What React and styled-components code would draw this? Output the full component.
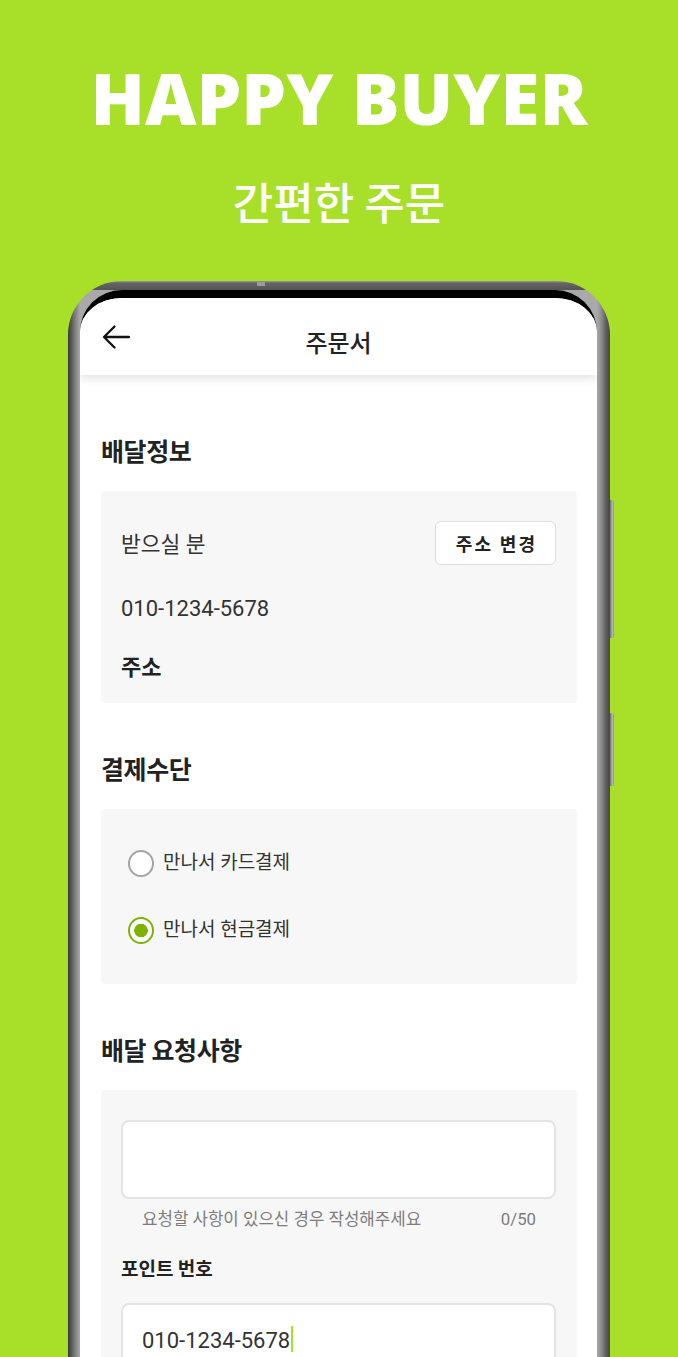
import styled, { createGlobalStyle } from "styled-components";

const GREEN = "#a7df29";

const GlobalStyle = createGlobalStyle`
  body {
    margin: 0;
    background: ${GREEN};
  }
  * {
    box-sizing: border-box;
  }
`;

const BackArrow = () => (
  <svg width="28" height="24" viewBox="0 0 28 24" fill="none">
    <path
      d="M27 12H2.5M12.5 1.5L2 12l10.5 10.5"
      stroke="#111"
      strokeWidth="2.3"
      strokeLinecap="round"
      strokeLinejoin="round"
    />
  </svg>
);

const App = () => {
  return (
    <Page>
      <GlobalStyle />
      <Title>HAPPY BUYER</Title>
      <Subtitle>간편한 주문</Subtitle>

      <Phone>
        <TopMark />
        <SideKey $top={219} $height={138} />
        <SideKey $top={432} $height={73} />

        <Screen>
          <AppBar>
            <BackButton aria-label="뒤로">
              <BackArrow />
            </BackButton>
            <BarTitle>주문서</BarTitle>
          </AppBar>

          <Content>
            <SectionTitle>배달정보</SectionTitle>
            <InfoCard>
              <InfoRow>
                <Recipient>받으실 분</Recipient>
                <ChangeButton>주소 변경</ChangeButton>
              </InfoRow>
              <PhoneNumber>010-1234-5678</PhoneNumber>
              <Address>주소</Address>
            </InfoCard>

            <SectionTitle>결제수단</SectionTitle>
            <PayCard>
              <RadioRow>
                <RadioMark />
                <RadioLabel>만나서 카드결제</RadioLabel>
              </RadioRow>
              <RadioRow>
                <RadioMark $checked />
                <RadioLabel>만나서 현금결제</RadioLabel>
              </RadioRow>
            </PayCard>

            <SectionTitle>배달 요청사항</SectionTitle>
            <RequestCard>
              <RequestBox readOnly value="" />
              <HelperRow>
                <span>요청할 사항이 있으신 경우 작성해주세요</span>
                <span>0/50</span>
              </HelperRow>
              <FieldLabel>포인트 번호</FieldLabel>
              <PointInput>
                010-1234-5678
                <Caret />
              </PointInput>
            </RequestCard>
          </Content>

          <ConfirmBar />
        </Screen>
      </Phone>
    </Page>
  );
};

export default App;

const Page = styled.div`
  height: 1357px;
  overflow: hidden;
  background: ${GREEN};
  display: flex;
  flex-direction: column;
  align-items: center;
`;

const Title = styled.h1`
  margin: 62px 0 0;
  font: 800 71px/72px "Open Sans", "Noto Sans", sans-serif;
  color: #fff;
`;

const Subtitle = styled.h2`
  margin: 45px 0 0;
  font: 500 44px/44px "Noto Sans CJK KR", sans-serif;
  color: #fff;
`;

const Phone = styled.div`
  position: relative;
  margin-top: 58px;
  width: 542px;
  flex: 1;
  display: flex;
  flex-direction: column;
  padding: 9px 13px 0 12px;
  border-radius: 54px 54px 0 0;
  background:
    linear-gradient(180deg, #9a9a9a 0, #666 2px, #535353 9px, transparent 9px),
    linear-gradient(
      90deg,
      #3a3a3a 0,
      #555 3px,
      #7d7d7d 7px,
      #a9a9a9 12px,
      #a9a9a9 calc(100% - 13px),
      #8f8f8f calc(100% - 9px),
      #5e5e5e calc(100% - 4px),
      #444 100%
    );
`;

const TopMark = styled.span`
  position: absolute;
  top: 1px;
  left: 189px;
  width: 8px;
  height: 4px;
  background: #9b9b9b;
`;

const SideKey = styled.span`
  position: absolute;
  right: -4px;
  top: ${(p) => p.$top}px;
  width: 4px;
  height: ${(p) => p.$height}px;
  border-radius: 0 2px 2px 0;
  background: linear-gradient(90deg, #6d6d6d, #b8b8b8 60%, #8a8a8a);
`;

const Screen = styled.div`
  position: relative;
  flex: 1;
  background: #fff;
  border-top: 8px solid #000;
  border-radius: 42px 42px 0 0;
  overflow: hidden;
  font-family: Roboto, "Noto Sans CJK KR", sans-serif;
  color: #333;
`;

const AppBar = styled.header`
  position: relative;
  z-index: 1;
  height: 77px;
  display: grid;
  grid-template-columns: 82px 1fr 82px;
  align-items: center;
  background: #fff;
  box-shadow: 0 3px 9px rgba(20, 20, 60, 0.13);
`;

const BackButton = styled.button`
  margin-left: 22px;
  padding: 0;
  border: 0;
  background: none;
  display: flex;
  justify-self: start;
`;

const BarTitle = styled.div`
  margin-top: 10px;
  text-align: center;
  font: 500 24px/30px "Noto Sans CJK KR", sans-serif;
  color: #222;
`;

const Content = styled.main`
  padding: 58px 20px 0 21px;
`;

const SectionTitle = styled.h3`
  margin: 0 0 24px;
  font: 700 25px/34px "Noto Sans CJK KR", sans-serif;
  letter-spacing: -0.4px;
  color: #222;
`;

const Card = styled.section`
  background: #f7f7f7;
  border-radius: 4px;
  margin-bottom: 48px;
`;

const InfoCard = styled(Card)`
  display: flex;
  flex-direction: column;
  padding: 30px 21px 23px 20px;
`;

const InfoRow = styled.div`
  height: 44px;
  display: flex;
  align-items: center;
  justify-content: space-between;
`;

const Recipient = styled.span`
  margin-top: 4px;
  font-size: 21.5px;
  line-height: 30px;
`;

const ChangeButton = styled.button`
  width: 121px;
  height: 44px;
  padding: 0 0 0 2px;
  background: #fff;
  border: 1px solid #dcdcdc;
  border-radius: 6px;
  font: 700 18px/1 "Noto Sans CJK KR", sans-serif;
  letter-spacing: 2.2px;
  color: #222;
`;

const PhoneNumber = styled.div`
  margin-top: 29px;
  font-size: 22px;
  line-height: 30px;
`;

const Address = styled.div`
  margin-top: 26px;
  font: 700 22px/30px "Noto Sans CJK KR", sans-serif;
  color: #222;
`;

const PayCard = styled(Card)`
  display: flex;
  flex-direction: column;
  gap: 37px;
  padding: 39px 20px 39px 27px;
`;

const RadioRow = styled.label`
  height: 30px;
  display: flex;
  align-items: center;
  gap: 9px;
`;

const RadioMark = styled.span`
  width: 26px;
  height: 27px;
  border-radius: 50%;
  border: ${(p) => (p.$checked ? "2.5px solid #7cb305" : "2px solid #a3a3a3")};
  background: ${(p) =>
    p.$checked
      ? "radial-gradient(circle, #7cb305 0 6.5px, #fff 7px)"
      : "#fff"};
`;

const RadioLabel = styled.span`
  font-size: 19px;
  line-height: 30px;
`;

const RequestCard = styled(Card)`
  padding: 30px 21px 40px 20px;
`;

const RequestBox = styled.textarea`
  display: block;
  width: 100%;
  height: 79px;
  resize: none;
  border: 2px solid #e4e4e4;
  border-radius: 8px;
  background: #fff;
  outline: none;
`;

const HelperRow = styled.div`
  margin-top: 9px;
  padding: 0 20px 0 21px;
  display: flex;
  justify-content: space-between;
  font-size: 16.8px;
  line-height: 22px;
  color: #7d7d7d;
`;

const FieldLabel = styled.div`
  margin-top: 25px;
  font: 700 19px/26px "Noto Sans CJK KR", sans-serif;
  color: #222;
`;

const PointInput = styled.div`
  margin-top: 22px;
  height: 80px;
  padding: 21px 19px 0;
  border: 2px solid #e4e4e4;
  border-radius: 8px;
  background: #fff;
  font-size: 22px;
  line-height: 30px;
  color: #333;
`;

const Caret = styled.span`
  display: inline-block;
  width: 2px;
  height: 26px;
  margin-left: 1px;
  vertical-align: -4px;
  background: ${GREEN};
`;

const ConfirmBar = styled.button`
  position: absolute;
  left: 21px;
  right: 20px;
  bottom: -45px;
  height: 56px;
  border: 0;
  border-radius: 6px;
  background: ${GREEN};
`;
